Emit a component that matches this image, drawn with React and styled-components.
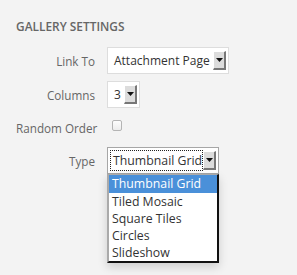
import styled, { createGlobalStyle } from "styled-components";

const GlobalStyle = createGlobalStyle`
  html, body {
    margin: 0;
    min-height: 100%;
  }
  body {
    min-height: 275px;
    background: #f3f3f3;
    font-family: "Open Sans", "DejaVu Sans", sans-serif;
  }
`;

const typeOptions = ["Thumbnail Grid", "Tiled Mosaic", "Square Tiles", "Circles", "Slideshow"];

const DropArrow = () => (
  <svg width="7" height="4" viewBox="0 0 7 4">
    <polygon points="0,0 7,0 3.5,4" fill="#111" />
  </svg>
);

const Select = ({ value, width, focused, children }) => (
  <StyledSelect $width={width} $focused={focused}>
    <StyledValue $focused={focused}>{value}</StyledValue>
    <StyledArrowBtn>
      <DropArrow />
    </StyledArrowBtn>
    {children}
  </StyledSelect>
);

export default function App() {
  return (
    <>
      <GlobalStyle />
      <StyledPanel>
        <StyledHeading>Gallery Settings</StyledHeading>
        <StyledForm>
          <StyledRow>
            <StyledLabel>Link To</StyledLabel>
            <Select value="Attachment Page" width={122} />
          </StyledRow>
          <StyledRow>
            <StyledLabel>Columns</StyledLabel>
            <Select value="3" width={33} />
          </StyledRow>
          <StyledRow $height={25}>
            <StyledLabel>Random Order</StyledLabel>
            <StyledCheckbox />
          </StyledRow>
          <StyledRow>
            <StyledLabel>Type</StyledLabel>
            <Select value="Thumbnail Grid" width={112} focused>
              <StyledList>
                {typeOptions.map((opt, i) => (
                  <StyledOption key={opt} $active={i === 0}>
                    {opt}
                  </StyledOption>
                ))}
              </StyledList>
            </Select>
          </StyledRow>
        </StyledForm>
      </StyledPanel>
    </>
  );
}

const StyledPanel = styled.div`
  min-height: 239px;
  padding: 18px 16px;
`;

const StyledHeading = styled.h2`
  margin: 0;
  font-size: 11.9px;
  line-height: 16px;
  font-weight: 600;
  color: #666;
  text-transform: uppercase;
`;

const StyledForm = styled.div`
  display: flex;
  flex-direction: column;
  gap: 7px;
  margin-top: 13px;
`;

const StyledRow = styled.div`
  display: flex;
  align-items: center;
  height: ${(p) => p.$height || 27}px;
`;

const StyledLabel = styled.span`
  width: 79px;
  margin-right: 12px;
  text-align: right;
  font-size: 11.7px;
  color: #666;
  white-space: nowrap;
`;

const StyledSelect = styled.div`
  position: relative;
  display: flex;
  align-items: center;
  box-sizing: border-box;
  width: ${(p) => p.$width}px;
  height: 27px;
  padding: 3px 2px 3px 3px;
  background: #fff;
  border: 1px solid ${(p) => (p.$focused ? "#a6a6a6" : "#ddd")};
`;

const StyledValue = styled.span`
  flex: 1;
  align-self: stretch;
  display: flex;
  align-items: center;
  padding-left: ${(p) => (p.$focused ? "2px" : "3px")};
  margin-right: ${(p) => (p.$focused ? "1px" : "2px")};
  font-size: ${(p) => (p.$focused ? "12.3px" : "12px")};
  color: #333;
  white-space: nowrap;
  overflow: hidden;
  outline: ${(p) => (p.$focused ? "1px dotted #222" : "none")};
`;

const StyledArrowBtn = styled.span`
  display: flex;
  align-items: center;
  justify-content: center;
  box-sizing: border-box;
  width: 13px;
  height: 100%;
  background: #dcdcdc;
  border-style: solid;
  border-width: 1px 2px 2px 1px;
  border-color: #fff #777 #777 #fff;
`;

const StyledCheckbox = styled.span`
  align-self: flex-start;
  box-sizing: border-box;
  width: 10px;
  height: 11px;
  margin: 5px 0 0 5px;
  border: 1px solid #b4b4b4;
  border-radius: 2px;
  background: linear-gradient(#fdfdfd, #ececec);
`;

const StyledList = styled.div`
  position: absolute;
  top: calc(100% + 1px);
  left: -1px;
  width: 112px;
  box-sizing: border-box;
  background: #fff;
  border-style: solid;
  border-width: 1px 2px 2px 2px;
  border-color: #aaa #111 #111 #aaa;
  box-shadow: 0 4px 9px rgba(0, 0, 0, 0.16);
  z-index: 2;
`;

const StyledOption = styled.div`
  height: 17px;
  line-height: 17px;
  padding-left: 3px;
  font-size: 12.3px;
  color: ${(p) => (p.$active ? "#fff" : "#333")};
  background: ${(p) => (p.$active ? "#4a90d9" : "transparent")};
  &:first-child {
    height: 18px;
    line-height: 18px;
  }
`;
